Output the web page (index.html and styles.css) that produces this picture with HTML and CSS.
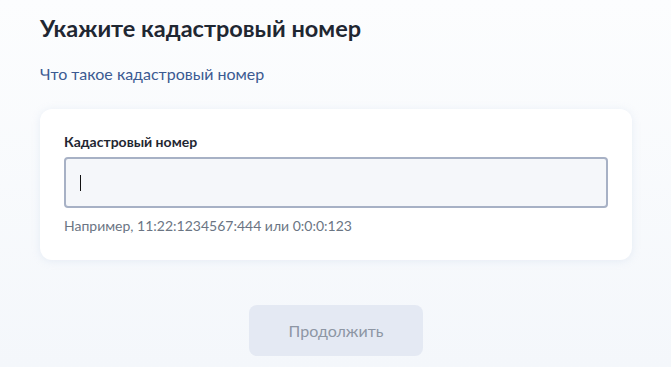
FILE: index.html
```html
<!DOCTYPE html>
<html lang="ru">
<head>
<meta charset="utf-8">
<link rel="stylesheet" href="styles.css">
</head>
<body>
<main class="page">
  <h1 class="title">Укажите кадастровый номер</h1>
  <a class="link" href="#">Что такое кадастровый номер</a>
  <section class="card">
    <label class="label">Кадастровый номер</label>
    <div class="input"><span class="caret"></span></div>
    <p class="hint">Например, 11:22:1234567:444 или 0:0:0:123</p>
  </section>
  <div class="actions">
    <button class="btn" type="button">Продолжить</button>
  </div>
</main>
</body>
</html>
```
FILE: styles.css
```css
* { box-sizing: border-box; }
html, body { margin: 0; padding: 0; }
body {
  width: 671px;
  height: 367px;
  overflow: hidden;
  background: linear-gradient(#fcfdfe, #f4f7fb);
  font-family: Lato, "Noto Sans", sans-serif;
  color: #0b1f33;
}
.page {
  padding: 12px 39px 0 40px;
  display: flex;
  flex-direction: column;
}
.title {
  margin: 0;
  font-size: 23.5px;
  line-height: 32px;
  font-weight: 700;
  color: #1f2732;
}
.link {
  margin-top: 18px;
  font-size: 16px;
  line-height: 24px;
  color: #3b5a92;
  text-decoration: none;
}
.card {
  margin-top: 23px;
  background: #ffffff;
  border-radius: 12px;
  box-shadow: 0 1px 8px rgba(170, 190, 220, 0.22);
  padding: 23px 24px 24px 24px;
  display: flex;
  flex-direction: column;
}
.label {
  font-size: 14px;
  line-height: 20px;
  font-weight: 700;
  color: #1f2732;
}
.input {
  margin-top: 5px;
  height: 51px;
  border: 2px solid #a7b1c5;
  border-radius: 4px;
  background: #f5f7fa;
  display: flex;
  align-items: center;
  padding-left: 14px;
}
.caret {
  width: 1px;
  height: 16px;
  background: #111;
}
.hint {
  margin: 8px 0 0 0;
  font-size: 14px;
  line-height: 20px;
  color: #6b7583;
}
.actions {
  display: flex;
  justify-content: center;
  margin-top: 45px;
}
.btn {
  width: 174px;
  height: 51px;
  border: none;
  border-radius: 8px;
  background: #e4e9f3;
  color: #8d96a4;
  font-family: Lato, "Noto Sans", sans-serif;
  font-size: 16px;
}
```
